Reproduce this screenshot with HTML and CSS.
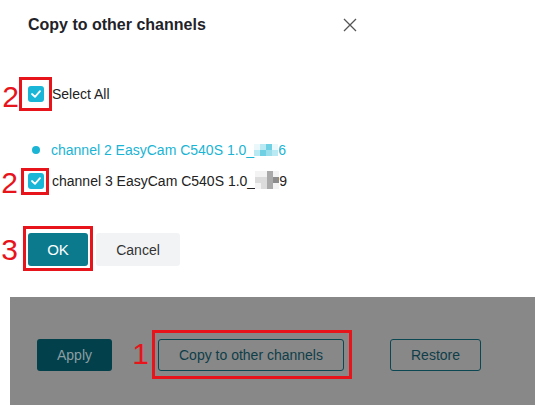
FILE: index.html
```html
<!DOCTYPE html>
<html>
<head>
<meta charset="utf-8">
<link rel="stylesheet" href="styles.css">
</head>
<body>
<div class="dialog">
  <div class="header">
    <div class="title">Copy to other channels</div>
    <svg class="close" width="14" height="14" viewBox="0 0 14 14"><path d="M1 1L13 13M13 1L1 13" stroke="#555" stroke-width="1.3" fill="none"/></svg>
  </div>

  <div class="row select-row">
    <span class="mark mark-a"><span class="num num-a">2</span><span class="cb"><svg width="10" height="8" viewBox="0 0 10 8"><path d="M1 4L4 6.8L9 1.2" stroke="#fff" stroke-width="1.8" fill="none" stroke-linecap="round" stroke-linejoin="round"/></svg></span></span>
    <span class="label">Select All</span>
  </div>

  <div class="row ch2">
    <span class="dot"></span>
    <span class="label cyan">channel 2 EasyCam C540S 1.0_<span class="pix pix-c"><i class="c0"></i><i class="c1"></i><i class="c2"></i><i class="c0"></i><i class="c1"></i><i class="c2"></i><i class="c3"></i><i class="c1"></i></span>6</span>
  </div>

  <div class="row ch3">
    <span class="mark mark-b"><span class="num num-b">2</span><span class="cb"><svg width="10" height="8" viewBox="0 0 10 8"><path d="M1 4L4 6.8L9 1.2" stroke="#fff" stroke-width="1.8" fill="none" stroke-linecap="round" stroke-linejoin="round"/></svg></span></span>
    <span class="label">channel 3 EasyCam C540S 1.0_<span class="pix pix-g"><i class="g0"></i><i class="g0"></i><i class="g2"></i><i class="g0"></i><i class="g1"></i><i class="g1"></i><i class="g2"></i><i class="g3"></i><i class="g0"></i><i class="g1"></i><i class="g2"></i><i class="g0"></i></span>9</span>
  </div>

  <div class="btns">
    <span class="mark mark-c"><span class="num num-c">3</span><button class="btn ok">OK</button></span>
    <button class="btn cancel">Cancel</button>
  </div>
</div>

<div class="backdrop">
  <button class="btn apply">Apply</button>
  <span class="mark mark-d"><span class="num num-d">1</span><button class="btn outline copy">Copy to other channels</button></span>
  <button class="btn outline restore">Restore</button>
</div>
</body>
</html>
```

FILE: styles.css
```css
html, body {
  margin: 0;
  padding: 0;
  background: #ffffff;
  font-family: "Liberation Sans", Arial, sans-serif;
}

.dialog {
  padding: 15px 0 0 28px;
  width: 329px;
}

.header {
  display: flex;
  justify-content: space-between;
  align-items: center;
  height: 20px;
}

.title {
  font-size: 16px;
  font-weight: bold;
  line-height: 20px;
  color: #1f2329;
}

.close {
  display: block;
}

.row {
  display: flex;
  align-items: center;
  gap: 8px;
  font-size: 14px;
  line-height: 16px;
  color: #222;
}

.select-row {
  margin-top: 51px;
  height: 16px;
}

.ch2 {
  margin-top: 39px;
  height: 18px;
  gap: 0;
}

.ch3 {
  margin-top: 14px;
  height: 16px;
}

.label {
  white-space: nowrap;
}

.cyan {
  color: #1ab4d4;
}

.dot {
  width: 8px;
  height: 8px;
  border-radius: 50%;
  background: #1ab4d4;
  margin: 0 11px 0 4px;
}

.cb {
  display: flex;
  align-items: center;
  justify-content: center;
  width: 16px;
  height: 16px;
  border-radius: 3px;
  background: #19b6d7;
}

.mark {
  position: relative;
  display: inline-flex;
  border: 3px solid #e8141c;
}

.mark-a { padding: 6px 5px 6px 6px; margin: -9px -8px -9px -9px; }
.mark-b { padding: 2px 2px 3px 4px; margin: -5px -5px -6px -7px; }
.mark-c { padding: 4px 2px 2px 2px; margin: -7px -5px -5px -5px; }
.mark-d { padding: 6px 5px 5px 3px; margin: -9px -8px -8px -6px; }

.num {
  position: absolute;
  font-size: 30px;
  line-height: 30px;
  color: #e8141c;
  font-weight: normal;
}

.num-a { top: 2px; right: calc(100% + 3px); }
.num-b { top: -3px; right: calc(100% + 6px); }
.num-c { top: 6px; right: calc(100% + 8px); }
.num-d { top: 6px; right: calc(100% + 6px); }

.pix {
  display: inline-grid;
  grid-template-columns: repeat(4, 6px);
  vertical-align: middle;
}

.pix i {
  display: block;
}

.pix-c {
  grid-template-rows: repeat(2, 6px);
  margin-top: -3px;
}

.pix-g {
  grid-template-rows: repeat(3, 6px);
  margin-top: -4px;
}

.c0 { background: #eaf8fb; }
.c1 { background: #b9e9f3; }
.c2 { background: #6fd0e4; }
.c3 { background: #9adeec; }

.g0 { background: #f3f3f3; }
.g1 { background: #dcdcdc; }
.g2 { background: #a9a9a9; }
.g3 { background: #8c8c8c; }

.btns {
  display: flex;
  gap: 8px;
  margin-top: 44px;
}

.btn {
  font-family: "Liberation Sans", Arial, sans-serif;
  font-size: 14px;
  height: 33px;
  border: none;
  border-radius: 3px;
  padding: 0;
  cursor: pointer;
}

.ok {
  width: 60px;
  background: #0b7a8d;
  color: #ffffff;
  font-size: 15px;
}

.cancel {
  width: 84px;
  background: #f2f3f5;
  color: #333;
}

.backdrop {
  margin: 31px 0 0 10px;
  width: 525px;
  height: 108px;
  box-sizing: border-box;
  padding: 42px 0 0 27px;
  background: #888888;
  display: flex;
  align-items: flex-start;
  gap: 46px;
}

.apply {
  width: 75px;
  height: 32px;
  background: #02404c;
  color: #8b9ea1;
}

.outline {
  height: 32px;
  background: transparent;
  border: 1px solid #0b4753;
  color: #0f3e49;
}

.copy { width: 186px; }
.restore { width: 91px; }
```
